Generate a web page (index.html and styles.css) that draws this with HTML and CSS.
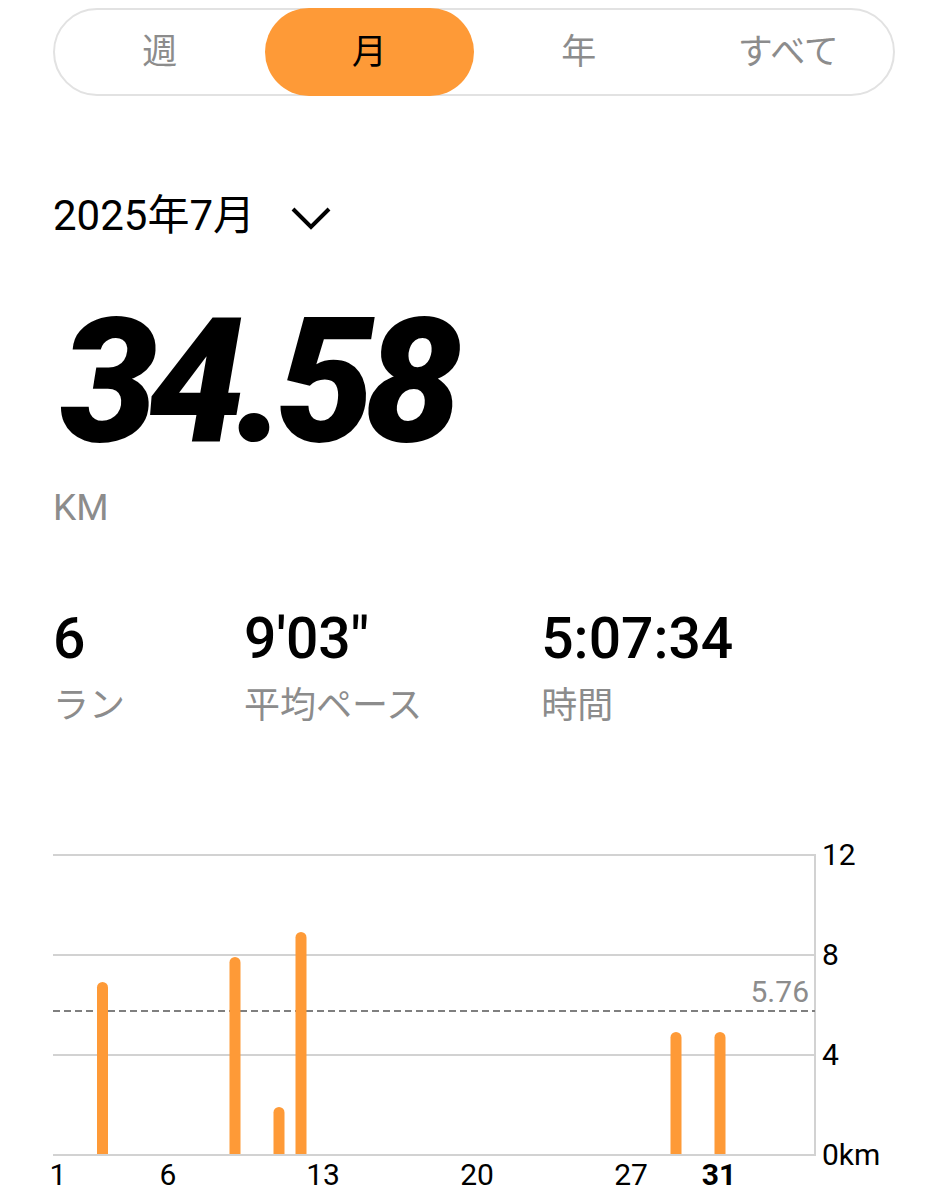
FILE: index.html
```html
<!DOCTYPE html>
<html lang="ja">
<head>
  <meta charset="UTF-8">
  <meta name="viewport" content="width=device-width, initial-scale=1.0">
  <title>アクティビティ</title>
  <link rel="stylesheet" href="styles.css">
</head>
<body>
  <div class="range-tabs">
    <div class="tab">週</div>
    <div class="tab active">月</div>
    <div class="tab">年</div>
    <div class="tab">すべて</div>
  </div>

  <div class="period">
    <span>2025年7月</span>
    <svg class="chevron" width="42" height="24" viewBox="0 0 42 24">
      <polyline points="3,3 21,21 39,3" fill="none" stroke="#000" stroke-width="4"/>
    </svg>
  </div>

  <div class="distance">34.58</div>
  <div class="unit">KM</div>

  <div class="stats">
    <div class="stat">
      <div class="stat-value">6</div>
      <div class="stat-label">ラン</div>
    </div>
    <div class="stat">
      <div class="stat-value">9'03"</div>
      <div class="stat-label">平均ペース</div>
    </div>
    <div class="stat">
      <div class="stat-value">5:07:34</div>
      <div class="stat-label">時間</div>
    </div>
  </div>

  <!-- daily distance chart: 25px per km, 22.05px per day -->
  <svg class="chart" width="949" height="370" viewBox="0 0 949 370">
    <g class="grid">
      <line x1="53" y1="26" x2="815" y2="26"/>
      <line x1="53" y1="126" x2="815" y2="126"/>
      <line x1="53" y1="226" x2="815" y2="226"/>
      <line x1="815" y1="25" x2="815" y2="327"/>
    </g>
    <line class="avg" x1="53" y1="182" x2="815" y2="182"/>
    <text class="avg-label" x="809" y="173">5.76</text>

    <g class="bars">
      <rect x="97" y="153" width="11" height="178" rx="5.5"/>
      <rect x="229.5" y="128" width="11" height="203" rx="5.5"/>
      <rect x="273.5" y="278" width="11" height="53" rx="5.5"/>
      <rect x="295.5" y="103" width="11" height="228" rx="5.5"/>
      <rect x="670.5" y="203" width="11" height="128" rx="5.5"/>
      <rect x="714.5" y="203" width="11" height="128" rx="5.5"/>
    </g>
    <rect x="53" y="327" width="762" height="10" fill="#fff"/>
    <line class="baseline" x1="53" y1="326" x2="815" y2="326"/>

    <g class="y-labels">
      <text x="822" y="36">12</text>
      <text x="822" y="136">8</text>
      <text x="822" y="236">4</text>
      <text x="822" y="336">0km</text>
    </g>
    <g class="x-labels">
      <text x="58" y="356">1</text>
      <text x="168" y="356">6</text>
      <text x="323" y="356">13</text>
      <text x="477" y="356">20</text>
      <text x="631" y="356">27</text>
      <text class="today" x="719" y="356">31</text>
    </g>
  </svg>
</body>
</html>
```

FILE: styles.css
```css
body {
  margin: 0;
  background-color: #ffffff;
  color: #000000;
  font-family: Roboto, "Noto Sans CJK JP", sans-serif;
}

.range-tabs {
  display: grid;
  grid-template-columns: repeat(4, 1fr);
  height: 88px;
  margin: 8px 54px 0 53px;
  border: 2px solid #e2e2e2;
  border-radius: 44px;
  box-sizing: border-box;
}

.tab {
  display: flex;
  align-items: center;
  justify-content: center;
  padding-bottom: 8px;
  font-size: 35px;
  color: #8c8c8c;
}

.tab.active {
  margin: -2px 0;
  background-color: #fe9a37;
  border-radius: 44px;
  color: #000000;
}

.period {
  display: flex;
  align-items: center;
  margin: 95px 0 0 53px;
  height: 50px;
  font-size: 42px;
  line-height: 50px;
}

.chevron {
  margin-left: 35px;
  margin-top: 4px;
}

.distance {
  margin: 53px 0 0 60px;
  font-size: 174px;
  line-height: 176px;
  font-weight: 900;
  font-style: italic;
  letter-spacing: -10px;
}

.unit {
  margin: 16px 0 0 53px;
  font-size: 37px;
  line-height: 44px;
  color: #8c8c8c;
}

.stats {
  display: flex;
  gap: 119px;
  margin: 76px 0 0 53px;
}

.stat-value {
  font-size: 57px;
  line-height: 66px;
  font-weight: 500;
}

.stat-label {
  margin-top: 12px;
  font-size: 36px;
  line-height: 44px;
  color: #8c8c8c;
}

.chart {
  display: block;
  margin-top: 101px;
}

.grid line,
.baseline {
  stroke: #d2d2d2;
  stroke-width: 2;
}

.avg {
  stroke: #7f7f7f;
  stroke-width: 2;
  stroke-dasharray: 7 4;
}

.avg-label {
  fill: #8c8c8c;
  font-size: 30px;
  text-anchor: end;
}

.bars rect {
  fill: #fe9a37;
}

.y-labels text {
  font-size: 30px;
  fill: #000000;
}

.x-labels text {
  font-size: 30px;
  text-anchor: middle;
  fill: #000000;
}

.x-labels .today {
  font-weight: 700;
}
```
